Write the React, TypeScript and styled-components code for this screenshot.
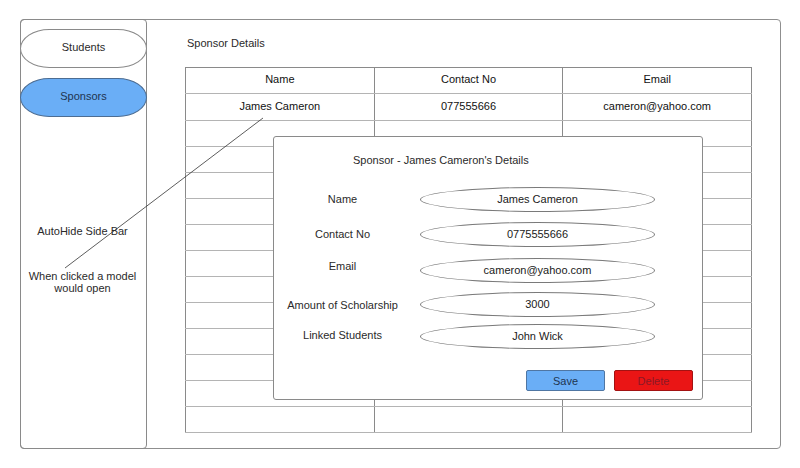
import React from "react";
import styled, { createGlobalStyle } from "styled-components";

const GlobalStyle = createGlobalStyle`
  html, body {
    margin: 0;
    padding: 0;
    background: #fff;
  }
  body {
    font-family: "Liberation Sans", Arial, sans-serif;
    font-size: 11px;
    color: #2a2a2a;
  }
`;

const Page = styled.div`
  position: relative;
  width: 800px;
  height: 468px;
  padding: 19px 0 0 20px;
  box-sizing: border-box;
`;

const Frame = styled.div`
  position: relative;
  display: flex;
  width: 761px;
  height: 430px;
  box-sizing: border-box;
  border: 1px solid #8f8f8f;
  border-radius: 4px;
`;

const Sidebar = styled.aside`
  display: flex;
  flex-direction: column;
  align-items: stretch;
  width: 127px;
  margin: -1px 0 -1px -1px;
  padding-top: 9px;
  box-sizing: border-box;
  border: 1px solid #8a8a8a;
  border-radius: 4px;
`;

const NavPill = styled.div<{ $active?: boolean }>`
  display: flex;
  align-items: center;
  justify-content: center;
  height: 39px;
  margin: 0 -1px 10px;
  padding-bottom: 3px;
  box-sizing: border-box;
  border: 1px solid ${(p) => (p.$active ? "#4d6d92" : "#8a8a8a")};
  border-radius: 30px / 20px;
  background: ${(p) => (p.$active ? "#6aaef6" : "#fff")};
  color: ${(p) => (p.$active ? "#1f3550" : "#2a2a2a")};
`;

const Note = styled.p<{ $top: number }>`
  margin: ${(p) => p.$top}px 0 0;
  text-align: center;
  line-height: 12.5px;
  padding-right: 2px;
`;

const Main = styled.main`
  flex: 1;
  padding: 17px 0 0 38px;
`;

const Heading = styled.h2`
  margin: 0 0 17px 2px;
  font-size: 11px;
  font-weight: normal;
  line-height: 13px;
`;

const Grid = styled.table`
  width: 567px;
  border-collapse: collapse;
  table-layout: fixed;
  border: 1px solid #8a8a8a;
`;

const Row = styled.tr<{ $h?: number }>`
  height: ${(p) => p.$h ?? 26}px;
`;

const Cell = styled.td`
  border-left: 1px solid #8a8a8a;
  border-right: 1px solid #8a8a8a;
  border-top: 1px solid #b4b4b4;
  border-bottom: 1px solid #b4b4b4;
  padding: 0 0 3px;
  text-align: center;
  vertical-align: middle;
  color: #111;
`;

const HeadCell = styled.th`
  border: 1px solid #8a8a8a;
  border-bottom-color: #b4b4b4;
  padding: 0 0 3px;
  font-weight: normal;
  text-align: center;
  color: #111;
`;

const Modal = styled.div`
  position: absolute;
  left: 252px;
  top: 116px;
  width: 430px;
  height: 264px;
  box-sizing: border-box;
  display: flex;
  flex-direction: column;
  background: #fff;
  border: 1px solid #8a8a8a;
  border-radius: 3px;
`;

const ModalTitle = styled.div`
  margin: 17px 0 0 79px;
  line-height: 13px;
`;

const Fields = styled.div`
  display: flex;
  flex-direction: column;
  margin-top: 20px;
`;

const FieldRow = styled.div<{ $mt: number }>`
  display: grid;
  grid-template-columns: 137px 235px;
  column-gap: 9px;
  align-items: center;
  margin-top: ${(p) => p.$mt}px;
`;

const Label = styled.span<{ $shift: number }>`
  text-align: center;
  transform: translateY(${(p) => p.$shift}px);
`;

const Oval = styled.div`
  display: flex;
  align-items: center;
  justify-content: center;
  height: 25px;
  padding-bottom: 1px;
  box-sizing: border-box;
  border: 1px solid #7a7a7a;
  border-radius: 50%;
  color: #1a1a1a;
`;

const Actions = styled.div`
  display: flex;
  justify-content: flex-end;
  gap: 9px;
  margin-top: auto;
  padding: 0 9px 8px 0;
`;

const Button = styled.button<{ $tone: "save" | "delete" }>`
  width: 79px;
  height: 21px;
  padding: 0;
  font-family: inherit;
  font-size: 11px;
  border-radius: 2px;
  border: 1px solid ${(p) => (p.$tone === "save" ? "#4f76a3" : "#a31212")};
  background: ${(p) => (p.$tone === "save" ? "#6aaef6" : "#ea1515")};
  color: ${(p) => (p.$tone === "save" ? "#1f3550" : "#8c1826")};
`;

const Connector = styled.svg`
  position: absolute;
  left: 0;
  top: 0;
  pointer-events: none;
`;

const sponsors = [{ name: "James Cameron", contact: "077555666", email: "cameron@yahoo.com" }];

const fields = [
  { label: "Name", value: "James Cameron", mt: 0, shift: -1 },
  { label: "Contact No", value: "0775555666", mt: 10, shift: -1 },
  { label: "Email", value: "cameron@yahoo.com", mt: 11, shift: -5 },
  { label: "Amount of Scholarship", value: "3000", mt: 9, shift: 0 },
  { label: "Linked Students", value: "John Wick", mt: 7, shift: -2 },
];

const App = () => {
  const emptyRows = Array.from({ length: 12 });

  return (
    <Page>
      <GlobalStyle />
      <Frame>
        <Sidebar>
          <NavPill>Students</NavPill>
          <NavPill $active>Sponsors</NavPill>
          <Note $top={98}>AutoHide Side Bar</Note>
          <Note $top={32}>
            When clicked a model
            <br />
            would open
          </Note>
        </Sidebar>
        <Main>
          <Heading>Sponsor Details</Heading>
          <Grid>
            <thead>
              <Row>
                <HeadCell>Name</HeadCell>
                <HeadCell>Contact No</HeadCell>
                <HeadCell>Email</HeadCell>
              </Row>
            </thead>
            <tbody>
              {sponsors.map((s, i) => (
                <Row key={i} $h={27}>
                  <Cell>{s.name}</Cell>
                  <Cell>{s.contact}</Cell>
                  <Cell>{s.email}</Cell>
                </Row>
              ))}
              {emptyRows.map((_, i) => (
                <Row key={"e" + i}>
                  <Cell />
                  <Cell />
                  <Cell />
                </Row>
              ))}
            </tbody>
          </Grid>
        </Main>
        <Modal>
          <ModalTitle>Sponsor - James Cameron's Details</ModalTitle>
          <Fields>
            {fields.map((f) => (
              <FieldRow key={f.label} $mt={f.mt}>
                <Label $shift={f.shift}>{f.label}</Label>
                <Oval>{f.value}</Oval>
              </FieldRow>
            ))}
          </Fields>
          <Actions>
            <Button $tone="save">Save</Button>
            <Button $tone="delete">Delete</Button>
          </Actions>
        </Modal>
      </Frame>
      <Connector width="800" height="468">
        <line x1="263" y1="118" x2="65" y2="268" stroke="#333" strokeWidth="0.8" />
      </Connector>
    </Page>
  );
};

export default App;
